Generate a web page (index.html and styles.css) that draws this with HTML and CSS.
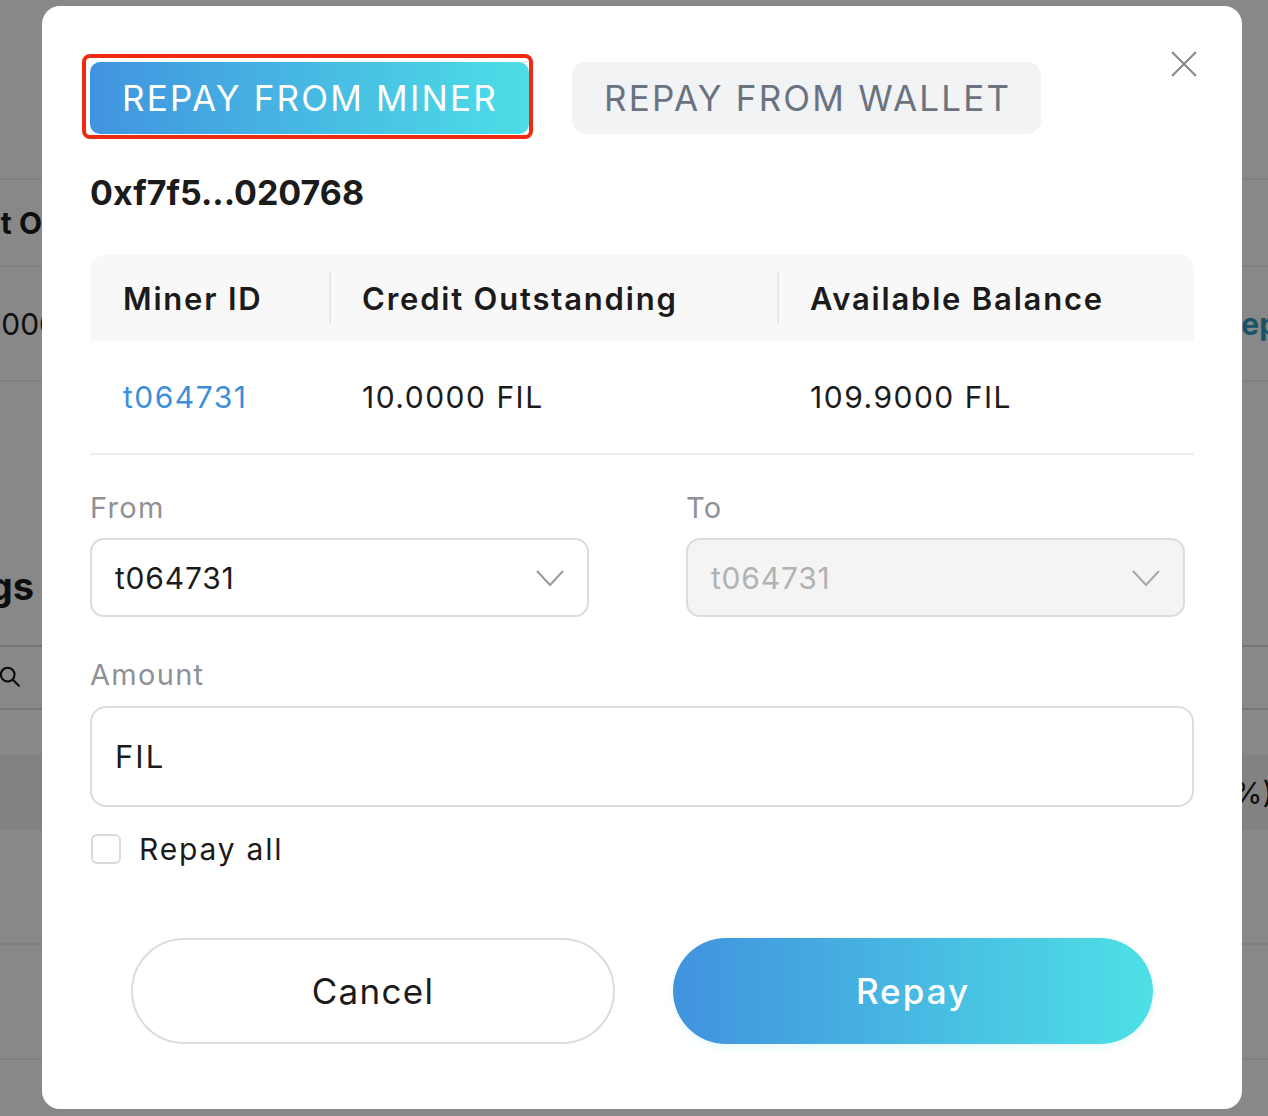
FILE: index.html
```html
<!DOCTYPE html>
<html lang="en">
<head>
    <meta charset="UTF-8">
    <meta name="viewport" content="width=device-width, initial-scale=1.0">
    <title>Repay</title>
    <link rel="stylesheet" href="styles.css">
</head>
<body>

<!-- page behind the dialog -->
<div class="page">
    <div class="page-top"></div>
    <div class="page-row">
        <span class="page-left bold narrow">Credit O</span>
    </div>
    <div class="page-row tall">
        <span class="page-left">10.0000</span>
        <span class="page-right link">Repay</span>
    </div>
    <div class="page-title">
        <span class="page-left title">Holdings</span>
    </div>
    <div class="page-search">
        <span class="page-left search-icon">
            <svg width="28" height="28" viewBox="0 0 28 28"><circle cx="9" cy="10" r="8" fill="none" stroke="#111" stroke-width="2.4"/><line x1="15" y1="16" x2="22" y2="23" stroke="#111" stroke-width="2.4" stroke-linecap="round"/></svg>
        </span>
    </div>
    <div class="page-thead">
        <span class="page-right">(%)</span>
    </div>
    <div class="page-row tall"></div>
    <div class="page-row tall"></div>
</div>

<div class="overlay">
    <div class="modal">
        <button class="close" aria-label="Close">
            <svg width="26" height="26" viewBox="0 0 26 26"><path d="M1 1 L25 25 M25 1 L1 25" stroke="#8a8a8a" stroke-width="2.2" fill="none"/></svg>
        </button>

        <div class="tabs">
            <div class="tab-mark">
                <a href="#" class="tab active">REPAY FROM MINER</a>
            </div>
            <a href="#" class="tab">REPAY FROM WALLET</a>
        </div>

        <h2 class="address">0xf7f5...020768</h2>

        <div class="miner-table">
            <div class="th">Miner ID</div>
            <div class="th sep">Credit Outstanding</div>
            <div class="th sep">Available Balance</div>
            <div class="td"><a href="#" class="miner-link">t064731</a></div>
            <div class="td">10.0000 FIL</div>
            <div class="td">109.9000 FIL</div>
        </div>

        <div class="field-row">
            <div class="field">
                <label>From</label>
                <div class="select">
                    <span>t064731</span>
                    <svg width="30" height="18" viewBox="0 0 30 18"><path d="M2 2 L15 16 L28 2" stroke="#9a9a9a" stroke-width="2" fill="none"/></svg>
                </div>
            </div>
            <div class="field">
                <label>To</label>
                <div class="select disabled">
                    <span>t064731</span>
                    <svg width="30" height="18" viewBox="0 0 30 18"><path d="M2 2 L15 16 L28 2" stroke="#a8a8a8" stroke-width="2" fill="none"/></svg>
                </div>
            </div>
        </div>

        <div class="field amount">
            <label>Amount</label>
            <div class="amount-input">FIL</div>
        </div>

        <label class="check">
            <span class="box"></span>
            Repay all
        </label>

        <div class="actions">
            <a href="#" class="btn btn-cancel">Cancel</a>
            <a href="#" class="btn btn-repay">Repay</a>
        </div>
    </div>
</div>

</body>
</html>
```

FILE: styles.css
```css
/* base */
body {
    margin: 0;
    font-family: 'Inter', 'Noto Sans', sans-serif;
    background-color: #fff;
    color: #1b1b1b;
    width: 1268px;
    height: 1116px;
    overflow: hidden;
}

/* background page */
.page {
    width: 1268px;
}
.page-top {
    height: 178px;
    border-bottom: 2px solid #eee;
}
.page-row {
    height: 85px;
    border-bottom: 2px solid #eee;
    display: flex;
    align-items: center;
    justify-content: space-between;
    font-size: 30px;
}
.page-row.tall {
    height: 113px;
}
.page-left {
    width: 58px;
    overflow: hidden;
    display: flex;
    justify-content: flex-end;
    white-space: nowrap;
}
.page-left.narrow {
    width: 42px;
}
.page-right {
    width: 46px;
    overflow: hidden;
    white-space: nowrap;
}
.bold {
    font-weight: 700;
}
.link {
    color: #2d9cc4;
    font-weight: 700;
}
.page-title {
    height: 263px;
    box-sizing: border-box;
    display: flex;
    align-items: flex-end;
    padding-bottom: 36px;
}
.title {
    width: 34px;
    font-size: 38px;
    font-weight: 700;
}
.page-search {
    height: 61px;
    border-top: 2px solid #ddd;
    border-bottom: 2px solid #ddd;
    display: flex;
    align-items: center;
    margin-bottom: 45px;
}
.search-icon {
    width: 24px;
}
.page-thead {
    height: 75px;
    background-color: #f4f4f4;
    display: flex;
    align-items: center;
    justify-content: flex-end;
    font-size: 30px;
}

/* overlay + dialog */
.overlay {
    position: fixed;
    inset: 0;
    background-color: rgba(0, 0, 0, 0.465);
    display: flex;
    align-items: flex-start;
    padding: 6px 0 0 42px;
}
.modal {
    position: relative;
    width: 1200px;
    box-sizing: border-box;
    padding: 48px 48px 65px;
    background-color: #fff;
    border-radius: 18px;
}
.close {
    position: absolute;
    top: 45px;
    right: 45px;
    background: none;
    border: 0;
    padding: 0;
    cursor: pointer;
}

.tabs {
    display: flex;
    align-items: flex-start;
    gap: 39px;
}
.tab-mark {
    margin-left: -8px;
    border: 4px solid #f02a12;
    border-radius: 8px;
    padding: 4px 0 1px 4px;
}
.tab {
    display: block;
    height: 72px;
    line-height: 72px;
    padding: 0 30px 0 32px;
    border-radius: 14px;
    font-size: 35px;
    letter-spacing: 2.2px;
    text-decoration: none;
    color: #6b7280;
    background-color: #f2f3f5;
    margin-top: 8px;
}
.tab.active {
    margin-top: 0;
    padding: 0 31px 0 32px;
    color: #fff;
    letter-spacing: 2.2px;
    border-radius: 10px;
    background: linear-gradient(90deg, #4194df, #4ddee6);
}

.address {
    margin: 34px 0 0;
    font-size: 34px;
    line-height: 40px;
    font-weight: 700;
    color: #1b1b1b;
}

.miner-table {
    margin-top: 42px;
    display: grid;
    grid-template-columns: 239px 448px 1fr;
    border-bottom: 2px solid #eeeeee;
}
.th {
    position: relative;
    height: 86px;
    display: flex;
    align-items: center;
    padding-left: 33px;
    background-color: #f8f8f8;
    font-size: 31px;
    font-weight: 600;
    letter-spacing: 1.8px;
}
.th:first-child {
    border-top-left-radius: 14px;
}
.th:nth-child(3) {
    border-top-right-radius: 14px;
}
.th.sep::before {
    content: '';
    position: absolute;
    left: 0;
    top: 17px;
    bottom: 17px;
    width: 2px;
    background-color: #e8e8e8;
}
.td {
    height: 112px;
    display: flex;
    align-items: center;
    padding-left: 33px;
    font-size: 30px;
    letter-spacing: 1.5px;
}
.miner-link {
    color: #3d8fd8;
    text-decoration: none;
}

.field-row {
    margin-top: 37px;
    display: grid;
    grid-template-columns: 499px 499px;
    column-gap: 97px;
}
.field label {
    display: block;
    font-size: 29px;
    line-height: 32px;
    letter-spacing: 1.3px;
    color: #8e9198;
    margin-bottom: 14px;
}
.select {
    height: 79px;
    box-sizing: border-box;
    border: 2px solid #dcdcdc;
    border-radius: 14px;
    display: flex;
    align-items: center;
    justify-content: space-between;
    padding: 0 22px 0 23px;
    font-size: 30px;
    letter-spacing: 0.8px;
}
.select.disabled {
    background-color: #f4f4f4;
    color: #b2b2b2;
}

.amount {
    margin-top: 42px;
}
.amount label {
    margin-bottom: 15px;
}
.amount-input {
    height: 101px;
    box-sizing: border-box;
    border: 2px solid #dcdcdc;
    border-radius: 16px;
    display: flex;
    align-items: center;
    padding-left: 23px;
    font-size: 31px;
    letter-spacing: 2px;
}

.check {
    margin-top: 26px;
    display: flex;
    align-items: center;
    gap: 18px;
    font-size: 30px;
    line-height: 32px;
    letter-spacing: 1.8px;
}
.box {
    width: 30px;
    height: 30px;
    box-sizing: border-box;
    margin-left: 1px;
    border: 2px solid #dadada;
    border-radius: 6px;
}

.actions {
    margin-top: 73px;
    padding: 0 41px;
    display: flex;
    gap: 58px;
}
.btn {
    flex: 1;
    height: 106px;
    box-sizing: border-box;
    border-radius: 53px;
    display: flex;
    align-items: center;
    justify-content: center;
    font-size: 35px;
    letter-spacing: 1.3px;
    text-decoration: none;
}
.btn-cancel {
    border: 2px solid #dcdcdc;
    color: #1b1b1b;
}
.btn-repay {
    color: #fff;
    font-weight: 500;
    letter-spacing: 2px;
    background: linear-gradient(90deg, #4192de, #4ee0e6);
    box-shadow: 0 4px 6px rgba(77, 224, 230, 0.12);
}
```
